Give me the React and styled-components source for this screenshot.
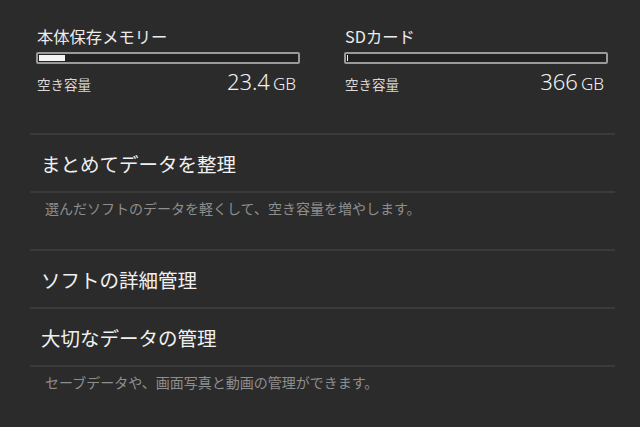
import React from "react";
import styled, { createGlobalStyle } from "styled-components";

const GlobalStyle = createGlobalStyle`
  html, body {
    margin: 0;
    padding: 0;
    background: #2b2b2b;
  }
  body {
    font-family: "Noto Sans CJK JP", "Noto Sans", sans-serif;
    color: #ececec;
  }
`;

const Page = styled.div`
  width: 640px;
  height: 427px;
  overflow: hidden;
  background: #2b2b2b;
`;

const StorageRow = styled.div`
  display: grid;
  grid-template-columns: 264px 264px;
  column-gap: 44px;
  padding: 26px 0 0 36px;
  height: 106px;
  box-sizing: border-box;
`;

const Storage = styled.div`
  display: flex;
  flex-direction: column;
`;

const StorageName = styled.div`
  font-size: 16.3px;
  line-height: 20px;
  margin-left: 1px;
  margin-bottom: 6px;
`;

const Bar = styled.div`
  height: 12px;
  border: 2px solid #9a9a9a;
  border-radius: 2px;
  box-sizing: border-box;
  padding: 1px;
  background: #222;
`;

const BarFill = styled.div`
  height: 100%;
  background: #f4f4f4;
  min-width: 1px;
`;

const FreeRow = styled.div`
  display: flex;
  justify-content: space-between;
  align-items: baseline;
  margin-top: 2px;
  padding: 0 4px 0 1px;
`;

const FreeLabel = styled.span`
  font-size: 13.5px;
  color: #d8d8d8;
`;

const FreeValue = styled.span`
  font-family: "Noto Sans", sans-serif;
  font-weight: 300;
  font-size: 22px;
  color: #f2f2f2;
`;

const Unit = styled.span`
  font-size: 17px;
  margin-left: 3px;
`;

const List = styled.div`
  margin: 0 25px 0 30px;
  padding-top: 27px;
`;

const Divider = styled.div`
  height: 2px;
  background: #3a3a3a;
`;

const Item = styled.div`
  height: 56px;
  display: flex;
  align-items: center;
  padding-left: 11px;
  font-size: 19.5px;
  color: #f0f0f0;
`;

const Note = styled.div`
  height: 56px;
  padding: 5px 0 0 15px;
  box-sizing: border-box;
  font-size: 14px;
  line-height: 20px;
  color: #8e8e8e;
`;

const storages = [
  { name: "本体保存メモリー", used: 10, free: "23.4" },
  { name: "SDカード", used: 0, free: "366" },
];

const App = () => (
  <Page>
    <GlobalStyle />
    <StorageRow>
      {storages.map((s) => (
        <Storage key={s.name}>
          <StorageName>{s.name}</StorageName>
          <Bar>
            <BarFill style={{ width: `${s.used}%` }} />
          </Bar>
          <FreeRow>
            <FreeLabel>空き容量</FreeLabel>
            <FreeValue>
              {s.free}
              <Unit>GB</Unit>
            </FreeValue>
          </FreeRow>
        </Storage>
      ))}
    </StorageRow>
    <List>
      <Divider />
      <Item>まとめてデータを整理</Item>
      <Divider />
      <Note>選んだソフトのデータを軽くして、空き容量を増やします。</Note>
      <Divider />
      <Item>ソフトの詳細管理</Item>
      <Divider />
      <Item>大切なデータの管理</Item>
      <Divider />
      <Note>セーブデータや、画面写真と動画の管理ができます。</Note>
    </List>
  </Page>
);

export default App;
